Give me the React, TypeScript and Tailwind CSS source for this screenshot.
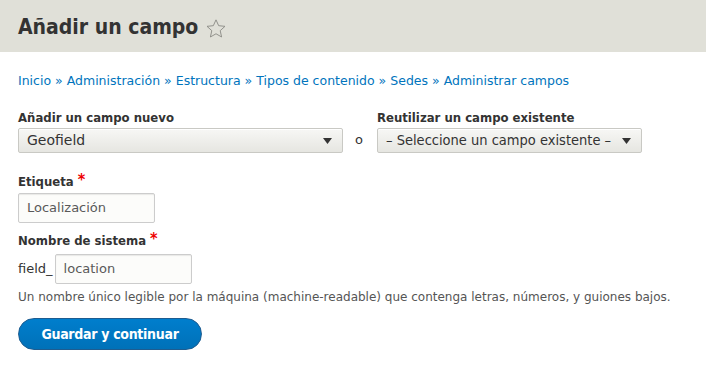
import React from 'react';

const crumbs = ['Inicio', 'Administración', 'Estructura', 'Tipos de contenido', 'Sedes', 'Administrar campos'];

const Arrow = () => (
  <svg width="9" height="6" viewBox="0 0 9 6" className="shrink-0">
    <path d="M0 0 L9 0 L4.5 6 Z" fill="#333" />
  </svg>
);

const Star = () => (
  <svg width="22" height="22" viewBox="0 0 24 24" className="ml-[7px] mt-0.5">
    <path
      d="M12 2l2.9 6.4 6.9.7-5.2 4.7 1.5 6.9L12 17.2l-6.1 3.5 1.5-6.9-5.2-4.7 6.9-.7z"
      fill="none"
      stroke="#8a8a84"
      strokeWidth="1"
      strokeLinejoin="round"
    />
  </svg>
);

const Select = ({ value, width, size }: { value: string; width: string; size: string }) => (
  <div
    className={`${width} ${size} h-[25px] flex items-center justify-between pl-2 pr-2.5 rounded-[2px] border border-[#c9c9c4] bg-gradient-to-b from-[#f7f7f5] to-[#e6e6e1] text-[#333] whitespace-nowrap shadow-[inset_0_1px_0_#fff]`}
  >
    <span>{value}</span>
    <Arrow />
  </div>
);

const Required = () => <span className="text-[#e00] ml-1 text-[16px] leading-none">*</span>;

export default function App() {
  return (
    <div className="w-[706px] h-[379px] bg-white text-[#333] font-['DejaVu_Sans',sans-serif]">
      <div className="h-[52px] bg-[#e0e0d8] flex items-center pl-[18px] pt-1">
        <h1 className="text-[21px] font-bold text-[#333] font-['DejaVu_Sans_Condensed',sans-serif]">Añadir un campo</h1>
        <Star />
      </div>

      <div className="px-[18px]">
        <nav className="mt-[20px] text-[12.5px] text-[#0074bd] leading-[18px]">
          {crumbs.map((c, i) => (
            <span key={c}>
              {i > 0 && <span> » </span>}
              <a>{c}</a>
            </span>
          ))}
        </nav>

        <div className="mt-[18px] flex items-end">
          <div className="flex flex-col">
            <label className="text-[13px] font-bold leading-[20px] font-['DejaVu_Sans_Condensed',sans-serif]">
              Añadir un campo nuevo
            </label>
            <Select value="Geofield" width="w-[325px]" size="text-[14px]" />
          </div>
          <span className="w-[34px] text-center text-[13px] h-[25px] leading-[23px] pr-[2px]">o</span>
          <div className="flex flex-col">
            <label className="text-[13px] font-bold leading-[20px] font-['DejaVu_Sans_Condensed',sans-serif]">
              Reutilizar un campo existente
            </label>
            <div className="font-['DejaVu_Sans_Condensed',sans-serif]">
              <Select value="– Seleccione un campo existente –" width="w-[265px]" size="text-[14.5px]" />
            </div>
          </div>
        </div>

        <div className="mt-[19px]">
          <label className="text-[13px] font-bold leading-[20px] flex items-start font-['DejaVu_Sans_Condensed',sans-serif]">
            Etiqueta
            <Required />
          </label>
          <div className="mt-[1px] w-[137px] h-[30px] border border-[#ccc] rounded-[2px] bg-[#fcfcfa] flex items-center px-2 text-[13px] text-[#595959] shadow-[inset_0_1px_1px_rgba(0,0,0,0.08)]">
            Localización
          </div>
        </div>

        <div className="mt-[8px]">
          <label className="text-[13px] font-bold leading-[20px] flex items-start font-['DejaVu_Sans_Condensed',sans-serif]">
            Nombre de sistema
            <Required />
          </label>
          <div className="mt-[3px] flex items-center">
            <span className="text-[13px] mr-[2px]">field_</span>
            <div className="w-[137px] h-[30px] border border-[#ccc] rounded-[2px] bg-[#fcfcfa] flex items-center px-2 text-[13px] text-[#595959] shadow-[inset_0_1px_1px_rgba(0,0,0,0.08)]">
              location
            </div>
          </div>
          <p className="mt-[4px] text-[12px] text-[#555] leading-[18px]">
            Un nombre único legible por la máquina (machine-readable) que contenga letras, números, y guiones bajos.
          </p>
        </div>

        <button className="mt-[12px] w-[184px] h-[32px] rounded-full bg-gradient-to-b from-[#007ecd] to-[#0071b8] border border-[#1e5c90] text-white font-bold text-[14px] tracking-[-0.3px] flex items-center justify-center font-['DejaVu_Sans_Condensed',sans-serif]">
          Guardar y continuar
        </button>
      </div>
    </div>
  );
}
